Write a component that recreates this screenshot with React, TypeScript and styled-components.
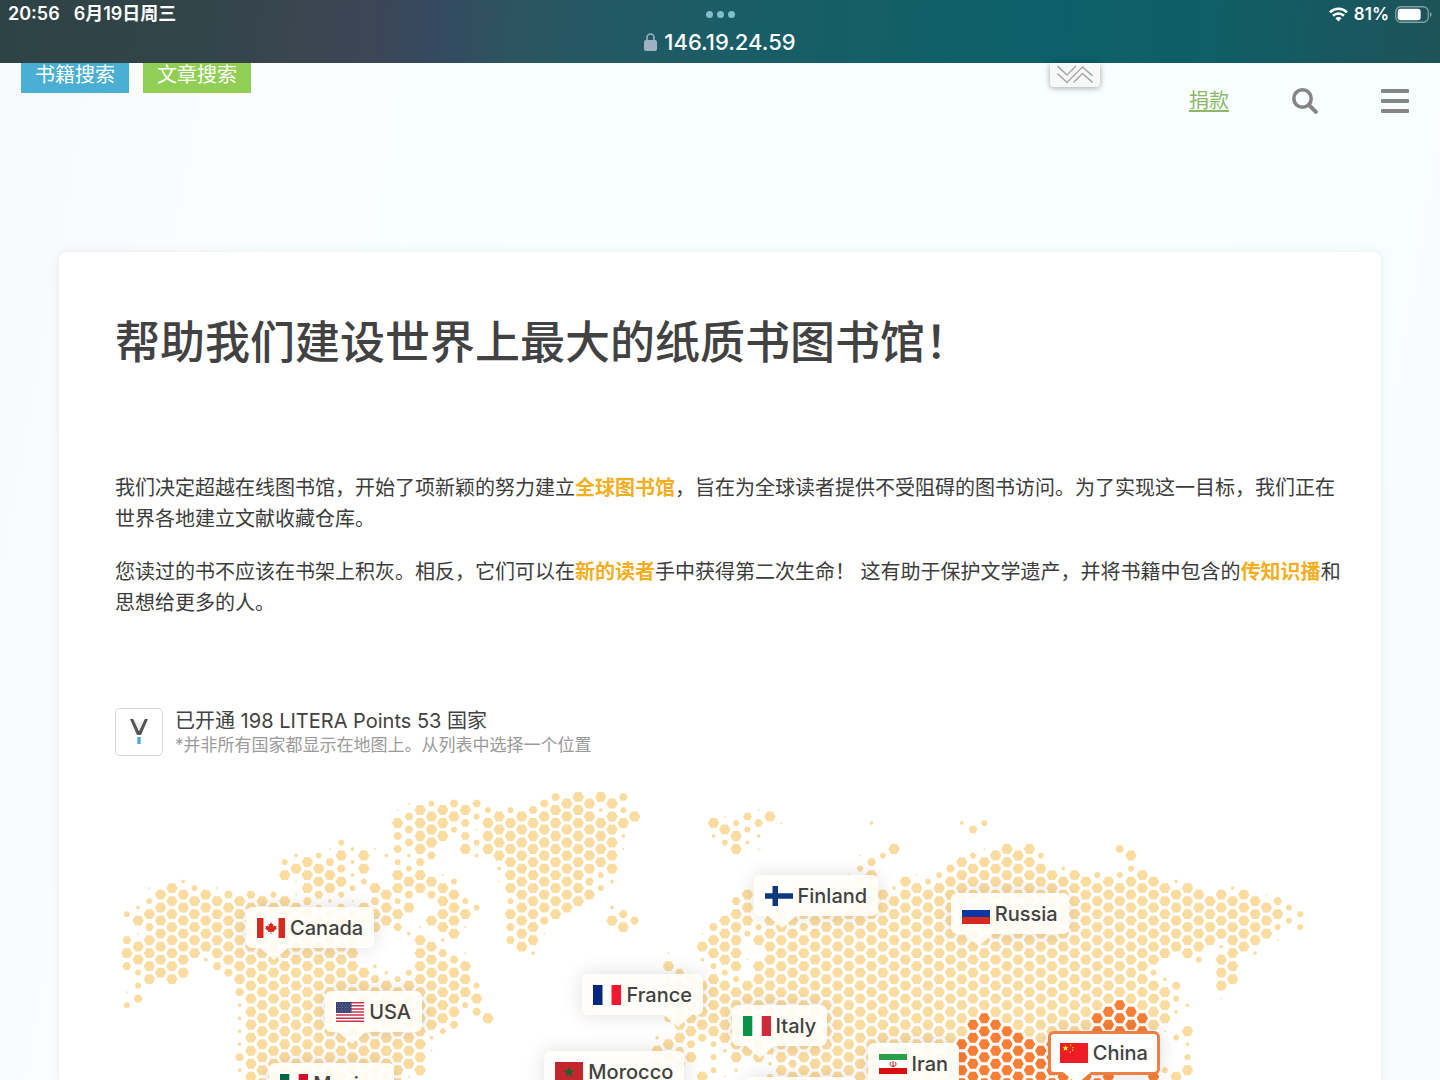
import React from 'react';
import styled, { createGlobalStyle } from 'styled-components';

const GlobalStyle = createGlobalStyle`
  * { box-sizing: border-box; }
  html, body { margin: 0; height: 100%; overflow: hidden; }
  body {
    font-family: Inter, "Noto Sans CJK SC", sans-serif;
    color: #424242;
    font-size: 20px;
  }
  button { font: inherit; color: inherit; border: 0; padding: 0; background: none; cursor: pointer; }
`;

const Screen = styled.div`
  height: 100vh;
  display: flex;
  flex-direction: column;
  overflow: hidden;
  background: linear-gradient(100deg, #f7f9fc 0%, #fbfcfe 14%, #f8fffe 34%, #f8fffe 78%, #f9fbfc 100%);
`;

const BrowserBar = styled.header`
  flex: none;
  height: 63px;
  display: grid;
  grid-template-columns: 1fr auto 1fr;
  padding: 0 8px;
  color: #fff;
  background: linear-gradient(95deg, #2e4346 0%, #324549 14%, #3a4650 21%, #3b4657 26%, #36495f 30%, #2d5360 35%, #235963 42%, #1b5d66 50%, #0c6069 72%, #105e67 84%, #1e5359 100%);
`;

const Status = styled.div<{ $end?: boolean }>`
  display: flex;
  gap: ${p => (p.$end ? 6 : 14)}px;
  height: 28px;
  align-items: ${p => (p.$end ? 'center' : 'baseline')};
  justify-content: ${p => (p.$end ? 'flex-end' : 'flex-start')};
  line-height: 28px;
  font-size: ${p => (p.$end ? 17 : 18)}px;
  font-weight: 600;
`;

const Center = styled.div`
  display: flex;
  flex-direction: column;
  align-items: center;
`;

const Dots = styled.div`
  display: flex;
  gap: 4px;
  height: 28px;
  align-items: center;
  i { width: 7px; height: 7px; border-radius: 50%; background: #7fbfca; }
`;

const Address = styled.div`
  display: flex;
  align-items: center;
  gap: 7px;
  line-height: 28px;
  font-size: 22px;
  font-weight: 500;
`;

const Nav = styled.nav`
  flex: none;
  height: 76px;
  display: flex;
  align-items: flex-start;
  justify-content: space-between;
  padding: 0 31px 0 21px;
`;

const NavGroup = styled.div<{ $gap: number }>`
  display: flex;
  gap: ${p => p.$gap}px;
`;

const SearchTab = styled.button<{ $color: string }>`
  height: 30px;
  padding: 0 14px 6px;
  line-height: 24px;
  color: #fff;
  background: ${p => p.$color};
`;

const Collapse = styled.button`
  width: 50px;
  height: 24px;
  margin-right: 26px;
  display: flex;
  justify-content: center;
  background: #f7f8f8;
  border-radius: 0 0 4px 4px;
  box-shadow: 0 1px 6px rgba(0, 0, 0, 0.35);
`;

const Donate = styled.a`
  line-height: 76px;
  color: #8db766;
  text-underline-offset: 2px;
`;

const IconButton = styled.button`
  height: 76px;
  display: flex;
  align-items: center;
`;

const Card = styled.main`
  flex: 1 0 auto;
  margin: 113px 59px 0;
  padding: 61px 57px 0 56px;
  background: #fff;
  border-radius: 8px 8px 0 0;
  box-shadow: 0 0 10px rgba(60, 90, 90, 0.1);
`;

const Title = styled.h1`
  margin: 0 0 100px;
  font-size: 45px;
  line-height: 60px;
  font-weight: 500;
`;

const Paragraph = styled.p`
  margin: 0 -24px 22px 0;
  line-height: 31px;
  color: #3c3c3c;
  b { color: #f3ae22; font-weight: 700; }
`;

const Legend = styled.section`
  display: flex;
  gap: 12px;
  margin: 89px 0 24px;
`;

const LegendIcon = styled.div`
  width: 48px;
  height: 48px;
  display: grid;
  place-items: center;
  border: 1px solid #d4d4d4;
  border-radius: 5px;
`;

const LegendText = styled.div`
  line-height: 26px;
  small { display: block; font-size: 17px; line-height: 22px; color: #9a9a9a; }
`;

const MapCanvas = styled.div`
  position: relative;
  aspect-ratio: 1208 / 600;
  margin-bottom: -600px;
  svg.land { display: block; width: 100%; }
`;

const Pin = styled.button<{ $x: number; $y: number; $tip: number; $active?: boolean; $min?: number }>`
  position: absolute;
  left: ${p => (p.$x / 1208) * 100}%;
  top: ${p => (p.$y / 600) * 100}%;
  min-width: ${p => p.$min ?? 0}px;
  height: ${p => (p.$active ? 44 : 41)}px;
  padding: 0 ${p => (p.$active ? 9 : 11)}px;
  display: flex;
  align-items: center;
  gap: 5px;
  font-weight: 500;
  white-space: nowrap;
  border-radius: 6px;
  border: ${p => (p.$active ? '3px solid #ee7f45' : '0')};
  background: ${p => (p.$active ? '#fff' : 'rgba(255, 254, 250, 0.9)')};
  box-shadow: 0 0 20px rgba(0, 0, 0, 0.13);
  &::after {
    content: '';
    position: absolute;
    top: 100%;
    left: ${p => p.$tip - 14}px;
    border: 14px solid transparent;
    border-top: 12px solid ${p => (p.$active ? '#fff' : 'rgba(255, 254, 250, 0.9)')};
    border-bottom: 0;
  }
`;

/* Land cells by column: "firstRow:sizes", size 1-5, r = highlighted full cell. */
const LAND: string[] = [
  '10:30454 16:13',
  '9:25155334',
  '8:13545555',
  '8:5555555',
  '8:55555555',
  '7:25555555',
  '8:355555',
  '8:555552',
  '8:1555554',
  '8:4555554',
  '9:555555542222422',
  '8:4555555555555555',
  '9:555555555555555',
  '8:3555555555555555',
  '6:35 9:555555555555555',
  '5:2511555555555555555',
  '6:555455555555555555',
  '5:355435555555555555',
  '5:1455245555555555555',
  '4:35453455555555555555',
  '5:2223145555555555555',
  '5:553 9:553 14:5555555555',
  '5:1 8:5455 14:2455555555',
  '5:2 8:555 14:255555555',
  '2:1544355354 15:355555555',
  '1:14442354502 14:355555551',
  '2:5555455 11:155555555555',
  '1:3555405405 12:5555555 19:21',
  '2:555 7:155552455555 19:3',
  '1:453 7:35555 13:455554',
  '2:5445 9:351 13:15553',
  '1:43132 9:3 15:354',
  '2:3555 18:5',
  '2:555521',
  '2:35555553544',
  '2:55555555555',
  '2:455555555552',
  '1:45555555541',
  '1:4555555555',
  '1:555555555',
  '1:555555555',
  '1:55555545',
  '1:52555533',
  '1:5555552 9:25',
  '1:43521 10:45',
  '2:5 10:4',
  '',
  '19:2555',
  '13:1530040555',
  '14:45555545',
  '15:5555545',
  '11:152 15:55554 22:5',
  '3:52 11:4553555553333',
  '2:153 10:5555355555201',
  '3:355 9:455555355555522',
  '2:432 8:5553 13:1 15:555555',
  '2:14210 11:35055555555055',
  '2:5 10:5555555555423',
  '3:1 10:55555555555555',
  '10:5555555555545',
  '10:54555555555555',
  '10:5555555555555',
  '10:55555555555555',
  '10:5555555555555',
  '7:1 10:55555555555555',
  '5:13405555555555555555',
  '3:2 6:455555555555555555',
  '5:300555555555555555',
  '5:5002555555555555555',
  '7:5555555555555555',
  '7:15555555555555555',
  '7:3555555555555555',
  '7:35555555555555555',
  '6:45555555555555555',
  '3:2 6:55555555555555rrrr',
  '3:4 5:3555555555555rrrrr',
  '3:3 5:1555555555555rrrrrr',
  '5:5555555555555rrrrr',
  '5:55555555555555rrrrr',
  '5:55555555555555rrrr',
  '5:555555555555555rrrr',
  '5:355555555555555rrr',
  '7:5555555555555rrrr',
  '6:25555555555555rrr',
  '7:5555555555555rrrr',
  '7:5555555555555rrr',
  '7:35555555555rrrrrr',
  '7:5555555555rrrrrr',
  '5:4 7:3555555555rrrrr',
  '5:535555555555rr',
  '7:55555555555rr',
  '7:555555535555000r',
  '8:555555 15:25551003',
  '7:2555550043203005',
  '8:555555000205235',
  '8:555553',
  '9:5555',
  '8:5555255510',
  '8:25555555',
  '8:55555',
  '9:55552',
  '8:1555',
  '9:4531',
  '9:33',
  '10:33',
];

const RADII = [0, 1, 2, 3.3, 4.4, 5.7];

function hexagon(cx: number, cy: number, r: number) {
  const h = r * 0.866;
  const half = r / 2;
  return `M${(cx - r).toFixed(1)} ${cy.toFixed(1)}l${half} ${-h}h${r}l${half} ${h}l${-half} ${h}h${-r}z`;
}

function buildLand() {
  let base = '';
  let highlight = '';
  LAND.forEach((column, k) => {
    column.split(' ').filter(Boolean).forEach(run => {
      const [start, cells] = run.split(':');
      [...cells].forEach((cell, i) => {
        const x = 11.8 + k * 11.274;
        const y = (k % 2 ? 10.5 : 4) + (Number(start) + i) * 13;
        if (cell === 'r') highlight += hexagon(x, y, RADII[5]);
        else if (cell !== '0') base += hexagon(x, y, RADII[Number(cell)]);
      });
    });
  });
  return { base, highlight };
}

const land = buildLand();

const FLAGS: Record<string, React.ReactNode> = {
  Canada: <><path fill="#fff" d="M0 0h28v20H0z" /><path fill="#d52b1e" d="M0 0h6.5v20H0zM21.500 0H28v20h-6.500zM14 4l1.200 2.300 1.300-.6-.5 3 1.600-1.500.4 1 1.700-.3-.7 1.900.8.6-3 2.500.3 1.100-2.800-.3.1 2.300h-.8l.1-2.300-2.800.3.3-1.100-3-2.500.8-.6-.7-1.900 1.700.3.4-1 1.600 1.500-.5-3 1.300.6z" /></>,
  USA: <><path fill="#fff" d="M0 0h28v20H0z" /><path stroke="#c8354b" strokeWidth="1.540" d="M0 .77h28M0 3.850h28M0 6.930h28M0 10h28M0 13.080h28M0 16.150h28M0 19.230h28" /><path fill="#34406f" d="M0 0h15.500v10.800H0z" /><path stroke="#8d96b8" strokeWidth=".8" strokeDasharray="1 1.600" d="M1 1.800h14M2.300 3.600h12M1 5.400h14M2.300 7.200h12M1 9h14" /></>,
  Mexico: <><path fill="#fff" d="M0 0h28v20H0z" /><path fill="#006847" d="M0 0h9.300v20H0z" /><path fill="#ce1126" d="M18.700 0H28v20h-9.300z" /><circle cx="14" cy="10" r="2.500" fill="#9a7342" /></>,
  Finland: <><path fill="#fff" d="M0 0h28v20H0z" /><path fill="#0c3a7c" d="M7.500 0h5.500v7.300h15v5.400H13V20H7.500v-7.300H0V7.300h7.500z" /></>,
  Russia: <><path fill="#fff" d="M0 0h28v20H0z" /><path fill="#0b37a4" d="M0 6h28v7H0z" /><path fill="#d52b1e" d="M0 13h28v7H0z" /></>,
  France: <><path fill="#fff" d="M0 0h28v20H0z" /><path fill="#06277e" d="M0 0h9.500v20H0z" /><path fill="#f31830" d="M18.500 0H28v20h-9.500z" /></>,
  Italy: <><path fill="#fff" d="M0 0h28v20H0z" /><path fill="#0a9347" d="M0 0h9.300v20H0z" /><path fill="#cf2b3a" d="M18.700 0H28v20h-9.300z" /></>,
  Morocco: <><path fill="#c1272d" d="M0 0h28v20H0z" /><path fill="#176233" d="M14 4.500l1.400 4h4.200l-3.400 2.500 1.300 4.100-3.500-2.500-3.500 2.500 1.300-4.100L8.400 8.500h4.200z" /></>,
  Iran: <><path fill="#fff" d="M0 0h28v20H0z" /><path fill="#2a9f47" d="M0 0h28v6H0z" /><path fill="#da1010" d="M0 14h28v6H0z" /><path fill="none" stroke="#da1010" strokeWidth="1" d="M14 7v6M12 8c-2 2-1 4 2 4.500 3-.5 4-2.500 2-4.500" /></>,
  China: <><path fill="#ee1c25" d="M0 0h28v20H0z" /><path fill="#ff0" d="M5.500 2l.8 2.200h2.300L6.800 5.600l.7 2.300-2-1.400-2 1.400.7-2.300-1.800-1.400h2.300zM10 1.500h1.200v1.200H10zM12.300 4h1.200v1.200h-1.200zM12 6.500h1.200v1.200H12zM9.800 8.500H11v1.200H9.800z" /></>,
};

type PinData = { name: string; x: number; y: number; tip: number; active?: boolean };

const PINS: PinData[] = [
  { name: 'Canada', x: 131, y: 127, tip: 28 },
  { name: 'USA', x: 210, y: 211, tip: 27 },
  { name: 'Mexico', x: 154, y: 283, tip: 28 },
  { name: 'Finland', x: 638, y: 95, tip: 28 },
  { name: 'Russia', x: 835, y: 113, tip: 28 },
  { name: 'France', x: 467, y: 194, tip: 96 },
  { name: 'Italy', x: 616, y: 225, tip: 28 },
  { name: 'Morocco', x: 429, y: 271, tip: 96 },
  { name: 'Iran', x: 752, y: 263, tip: 28 },
  { name: 'China', x: 932, y: 251, tip: 26, active: true },
];

export default function App() {
  return (
    <Screen>
      <GlobalStyle />
      <BrowserBar>
        <Status><span>20:56</span><span>6月19日周三</span></Status>
        <Center>
          <Dots><i /><i /><i /></Dots>
          <Address>
            <svg width="13" height="18" viewBox="0 0 13 18" aria-hidden="true">
              <rect x="0" y="7" width="13" height="11" rx="2" fill="#9db2c2" />
              <path d="M3 8V4.500a3.500 3.500 0 0 1 7 0V8" fill="none" stroke="#9db2c2" strokeWidth="1.600" />
            </svg>
            146.19.24.59
          </Address>
        </Center>
        <Status $end>
          <svg width="19" height="15" viewBox="0 0 19 15" fill="none" stroke="#fff" strokeWidth="2.600" aria-hidden="true">
            <path d="M1 5.200a12.200 12.200 0 0 1 17 0M4 8.700a8 8 0 0 1 11 0" />
            <path d="M9.500 14.500L6.400 11.300a4.400 4.400 0 0 1 6.200 0z" fill="#fff" stroke="none" />
          </svg>
          <span>81%</span>
          <svg width="37" height="17" viewBox="0 0 37 17" aria-hidden="true">
            <rect x=".75" y=".75" width="32.500" height="15.500" rx="5" fill="none" stroke="#fff" strokeOpacity=".45" strokeWidth="1.300" />
            <rect x="2.700" y="2.700" width="23" height="11.600" rx="3" fill="#fff" />
            <path d="M35 6v5c2-.7 2-4.300 0-5" fill="#fff" fillOpacity=".5" />
          </svg>
        </Status>
      </BrowserBar>
      <Nav>
        <NavGroup $gap={14}>
          <SearchTab $color="#4aafd2">书籍搜索</SearchTab>
          <SearchTab $color="#90cf54">文章搜索</SearchTab>
        </NavGroup>
        <NavGroup $gap={63}>
          <Collapse aria-label="收起">
            <svg width="36" height="21" viewBox="0 0 36 21" fill="none" stroke="#a9a9a9" strokeWidth="1.600">
              <path d="M.5 3l9.500 9L19 3M.5 10.500l9.500 9L25.500 4l10 9M16.500 19.500l9-9 10 9" />
            </svg>
          </Collapse>
          <Donate href="#donate">捐款</Donate>
          <IconButton aria-label="搜索">
            <svg width="26" height="26" viewBox="0 0 26 26" fill="none" stroke="#858585" strokeWidth="3.600" strokeLinecap="round">
              <circle cx="10.500" cy="10.500" r="8.700" /><path d="M17 17l6.800 6.800" strokeWidth="4" />
            </svg>
          </IconButton>
          <IconButton aria-label="菜单">
            <svg width="28" height="24" viewBox="0 0 28 24" fill="#858585">
              <rect width="28" height="4" rx="1" /><rect y="10" width="28" height="4" rx="1" /><rect y="20" width="28" height="4" rx="1" />
            </svg>
          </IconButton>
        </NavGroup>
      </Nav>
      <Card>
        <Title>帮助我们建设世界上最大的纸质书图书馆！</Title>
        <Paragraph>我们决定超越在线图书馆，开始了项新颖的努力建立<b>全球图书馆</b>，旨在为全球读者提供不受阻碍的图书访问。为了实现这一目标，我们正在世界各地建立文献收藏仓库。</Paragraph>
        <Paragraph>您读过的书不应该在书架上积灰。相反，它们可以在<b>新的读者</b>手中获得第二次生命！ 这有助于保护文学遗产，并将书籍中包含的<b>传知识播</b>和思想给更多的人。</Paragraph>
        <Legend>
          <LegendIcon>
            <svg width="18" height="26" viewBox="0 0 18 26" aria-hidden="true">
              <path d="M0 0h3.300l5.700 12L14.700 0H18l-7 16H7z" fill="#555" />
              <path d="M3.300 0l5.700 12L14.700 0 9 4z" fill="#eee" />
              <path d="M7.300 18h3.400v7H7.300z" fill="#47add5" />
            </svg>
          </LegendIcon>
          <LegendText>
            已开通 198 LITERA Points 53 国家
            <small>*并非所有国家都显示在地图上。从列表中选择一个位置</small>
          </LegendText>
        </Legend>
        <MapCanvas>
          <svg className="land" viewBox="0 0 1208 600" aria-hidden="true">
            <path d={land.base} fill="#fbdca0" />
            <path d={land.highlight} fill="#f87f35" />
          </svg>
          <Pin $x={629} $y={297} $tip={28} $min={111} aria-hidden="true" tabIndex={-1} />
          {PINS.map(pin => (
            <Pin key={pin.name} $x={pin.x} $y={pin.y} $tip={pin.tip} $active={pin.active}>
              <svg width="28" height="20" viewBox="0 0 28 20" aria-hidden="true">{FLAGS[pin.name]}</svg>
              {pin.name}
            </Pin>
          ))}
        </MapCanvas>
      </Card>
    </Screen>
  );
}
